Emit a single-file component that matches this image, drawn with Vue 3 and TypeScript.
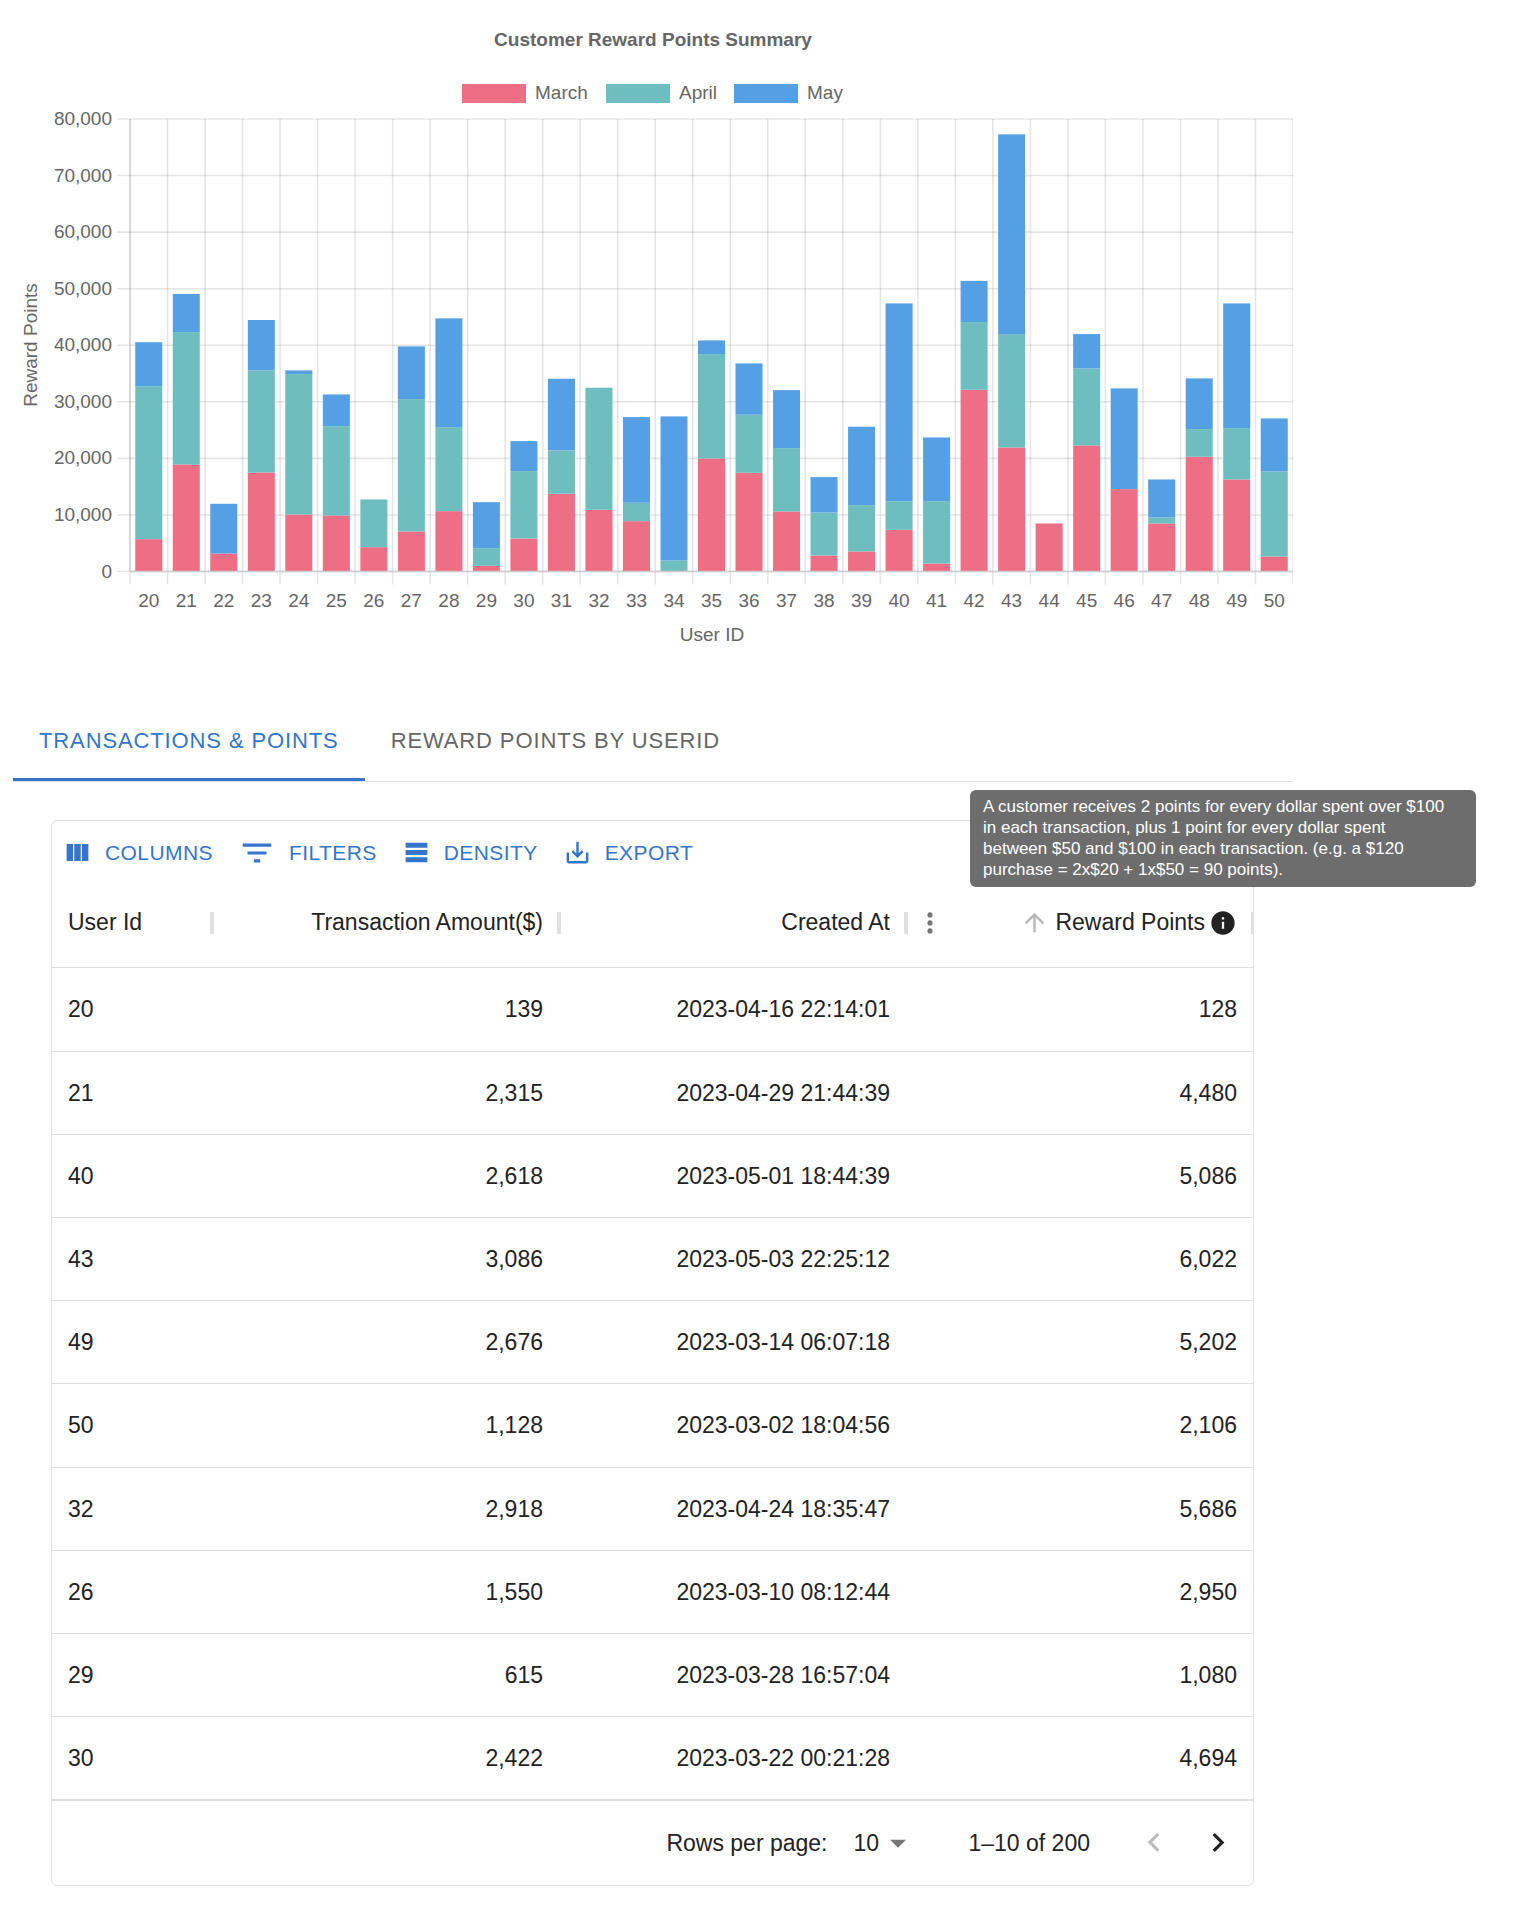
<script setup lang="ts">
import { computed, ref } from 'vue'

interface Transaction {
  userId: number
  amount: number
  createdAt: string
  points: number
}

const months = [
  { name: 'March', color: '#ee6e85', swatchX: 449, labelX: 522 },
  { name: 'April', color: '#6ebebf', swatchX: 593, labelX: 666 },
  { name: 'May', color: '#55a0e5', swatchX: 721, labelX: 794 },
]

// Running totals per user: [March, March + April, March + April + May]
const totals: Record<number, number[]> = {
  20: [5720, 32780, 40540],
  21: [18930, 42330, 49080],
  22: [3180, 3180, 11970],
  23: [17510, 35550, 44460],
  24: [10080, 34900, 35550],
  25: [9900, 25700, 31300],
  26: [4300, 12740, 12740],
  27: [7080, 30480, 39800],
  28: [10670, 25530, 44750],
  29: [1000, 4130, 12260],
  30: [5840, 17750, 23050],
  31: [13740, 21400, 34080],
  32: [10910, 32490, 32490],
  33: [8900, 12150, 27300],
  34: [0, 1950, 27420],
  35: [19990, 38440, 40860],
  36: [17450, 27710, 36790],
  37: [10610, 21820, 32070],
  38: [2830, 10440, 16690],
  39: [3540, 11730, 25590],
  40: [7370, 12440, 47400],
  41: [1415, 12440, 23700],
  42: [32130, 44100, 51380],
  43: [21930, 41980, 77280],
  44: [8490, 8490, 8490],
  45: [22290, 35910, 41980],
  46: [14560, 14560, 32370],
  47: [8490, 9550, 16270],
  48: [20280, 25180, 34140],
  49: [16270, 25350, 47400],
  50: [2650, 17690, 27060],
}

const plot = { left: 117, right: 1280, top: 106, bottom: 558.5, max: 80000 }
const users = Object.keys(totals).map(Number)
const step = (plot.right - plot.left) / users.length
const barWidth = step * 0.72

const yOf = (v: number) => plot.bottom - (v / plot.max) * (plot.bottom - plot.top)

const ticks = Array.from({ length: 9 }, (_, i) => ({
  y: yOf(i * 10000),
  label: (i * 10000).toLocaleString('en-US'),
}))
const columnLines = Array.from({ length: users.length + 1 }, (_, i) => plot.left + i * step)

const bars = computed(() =>
  users.map((id, i) => {
    const center = plot.left + (i + 0.5) * step
    const segments = totals[id]
      .map((total, m) => {
        const base = m === 0 ? 0 : totals[id][m - 1]
        return { y: yOf(total), height: yOf(base) - yOf(total), color: months[m].color }
      })
      .filter((s) => s.height > 0)
    return { id, center, x: center - barWidth / 2, segments }
  }),
)

const rows: Transaction[] = [
  { userId: 20, amount: 139, createdAt: '2023-04-16 22:14:01', points: 128 },
  { userId: 21, amount: 2315, createdAt: '2023-04-29 21:44:39', points: 4480 },
  { userId: 40, amount: 2618, createdAt: '2023-05-01 18:44:39', points: 5086 },
  { userId: 43, amount: 3086, createdAt: '2023-05-03 22:25:12', points: 6022 },
  { userId: 49, amount: 2676, createdAt: '2023-03-14 06:07:18', points: 5202 },
  { userId: 50, amount: 1128, createdAt: '2023-03-02 18:04:56', points: 2106 },
  { userId: 32, amount: 2918, createdAt: '2023-04-24 18:35:47', points: 5686 },
  { userId: 26, amount: 1550, createdAt: '2023-03-10 08:12:44', points: 2950 },
  { userId: 29, amount: 615, createdAt: '2023-03-28 16:57:04', points: 1080 },
  { userId: 30, amount: 2422, createdAt: '2023-03-22 00:21:28', points: 4694 },
]

const tools = [
  {
    label: 'Columns',
    path: 'M14.67 5v14H9.33V5h5.34zm1 14H21V5h-5.33v14zm-7.34 0V5H3v14h5.33z',
    large: false,
  },
  { label: 'Filters', path: 'M10 18h4v-2h-4v2zM3 6v2h18V6H3zm3 7h12v-2H6v2z', large: true },
  { label: 'Density', path: 'M21 8H3V4h18v4zm0 2H3v4h18v-4zm0 6H3v4h18v-4z', large: false },
  {
    label: 'Export',
    path: 'M19 12v7H5v-7H3v7c0 1.1.9 2 2 2h14c1.1 0 2-.9 2-2v-7h-2zm-6 .67l2.59-2.58L17 11.5l-5 5-5-5 1.41-1.41L11 12.67V3h2v9.67z',
    large: false,
  },
]

const tabs = ['Transactions & Points', 'Reward Points By UserId']
const activeTab = ref(0)
const pageSize = ref(10)
</script>

<template>
  <main class="page">
    <svg class="chart" viewBox="0 0 1280 640" role="img" aria-label="Customer Reward Points Summary">
      <text class="title" x="640" y="33" text-anchor="middle">Customer Reward Points Summary</text>
      <g v-for="m in months" :key="m.name">
        <rect :x="m.swatchX" y="71" width="64" height="19" :fill="m.color" />
        <text :x="m.labelX" y="86">{{ m.name }}</text>
      </g>

      <g class="grid-lines">
        <line v-for="t in ticks" :key="t.label" :x1="plot.left - 13" :x2="plot.right" :y1="t.y" :y2="t.y" />
        <line v-for="x in columnLines" :key="x" :x1="x" :x2="x" :y1="plot.top" :y2="plot.bottom + 13" />
        <line :x1="plot.left" :x2="plot.left" :y1="plot.top" :y2="plot.bottom" />
      </g>

      <g v-for="b in bars" :key="b.id">
        <rect
          v-for="s in b.segments"
          :key="s.color"
          :x="b.x"
          :y="s.y"
          :width="barWidth"
          :height="s.height"
          :fill="s.color"
        />
        <text :x="b.center" y="594" text-anchor="middle">{{ b.id }}</text>
      </g>
      <line class="axis" :x1="plot.left" :x2="plot.right" :y1="plot.bottom" :y2="plot.bottom" />

      <text v-for="t in ticks" :key="t.label" x="99" :y="t.y + 6" text-anchor="end">{{ t.label }}</text>
      <text x="699" y="628" text-anchor="middle">User ID</text>
      <text x="24" y="332" text-anchor="middle" transform="rotate(-90 24 332)">Reward Points</text>
    </svg>

    <div class="tabs" role="tablist">
      <button
        v-for="(tab, i) in tabs"
        :key="tab"
        type="button"
        role="tab"
        class="tab"
        :class="{ active: activeTab === i }"
        :aria-selected="activeTab === i"
        @click="activeTab = i"
      >
        {{ tab }}
      </button>
    </div>

    <section class="panel" role="tabpanel">
      <div class="data-grid">
        <div class="toolbar">
          <button v-for="tool in tools" :key="tool.label" type="button" class="tool">
            <svg :class="tool.large ? 'icon-lg' : 'icon-sm'" viewBox="0 0 24 24" aria-hidden="true">
              <path :d="tool.path" />
            </svg>
            {{ tool.label }}
          </button>
        </div>

        <table>
          <thead>
            <tr>
              <th class="col-id" scope="col">User Id<span class="separator"></span></th>
              <th scope="col">Transaction Amount($)<span class="separator"></span></th>
              <th scope="col">Created At<span class="separator"></span></th>
              <th scope="col">
                <div class="head">
                  <button type="button" class="menu" aria-label="Column menu">
                    <svg viewBox="0 0 24 24" aria-hidden="true">
                      <path
                        d="M12 8c1.1 0 2-.9 2-2s-.9-2-2-2-2 .9-2 2 .9 2 2 2zm0 2c-1.1 0-2 .9-2 2s.9 2 2 2 2-.9 2-2-.9-2-2-2zm0 6c-1.1 0-2 .9-2 2s.9 2 2 2 2-.9 2-2-.9-2-2-2z"
                      />
                    </svg>
                  </button>
                  <button type="button" class="sort" aria-label="Sort">
                    <svg class="icon-sm" viewBox="0 0 24 24" aria-hidden="true">
                      <path d="M4 12l1.41 1.41L11 7.83V20h2V7.83l5.58 5.59L20 12l-8-8-8 8z" />
                    </svg>
                  </button>
                  <span>Reward Points</span>
                  <span class="info">
                    <svg viewBox="0 0 24 24" aria-hidden="true">
                      <path
                        d="M12 2C6.48 2 2 6.48 2 12s4.48 10 10 10 10-4.48 10-10S17.52 2 12 2zm1 15h-2v-6h2v6zm0-8h-2V7h2v2z"
                      />
                    </svg>
                    <span class="tooltip" role="tooltip">
                      A customer receives 2 points for every dollar spent over $100 in each transaction, plus 1 point
                      for every dollar spent between $50 and $100 in each transaction. (e.g. a $120 purchase = 2x$20 +
                      1x$50 = 90 points).
                    </span>
                  </span>
                </div>
                <span class="separator last"></span>
              </th>
            </tr>
          </thead>
          <tbody>
            <tr v-for="r in rows" :key="r.userId">
              <td class="col-id">{{ r.userId }}</td>
              <td>{{ r.amount.toLocaleString('en-US') }}</td>
              <td>{{ r.createdAt }}</td>
              <td>{{ r.points.toLocaleString('en-US') }}</td>
            </tr>
          </tbody>
        </table>

        <footer class="footer">
          <label for="page-size">Rows per page:</label>
          <div class="select">
            <select id="page-size" v-model="pageSize">
              <option :value="10">10</option>
              <option :value="25">25</option>
              <option :value="50">50</option>
            </select>
            <svg viewBox="0 0 24 24" aria-hidden="true"><path d="M7 10l5 5 5-5z" /></svg>
          </div>
          <span>1–10 of 200</span>
          <div class="pager">
            <button type="button" aria-label="Previous page" disabled>
              <svg viewBox="0 0 24 24" aria-hidden="true">
                <path d="M15.41 16.09l-4.58-4.59 4.58-4.59L14 5.5l-6 6 6 6z" />
              </svg>
            </button>
            <button type="button" aria-label="Next page">
              <svg viewBox="0 0 24 24" aria-hidden="true">
                <path d="M8.59 16.34l4.58-4.59-4.58-4.59L10 5.75l6 6-6 6z" />
              </svg>
            </button>
          </div>
        </footer>
      </div>
    </section>
  </main>
</template>

<style>
body {
  background: #fff;
}
</style>

<style scoped>
.page {
  box-sizing: border-box;
  max-width: 1306px;
  padding: 13px;
  color: #222;
  font-family: 'Liberation Sans', Arial, sans-serif;
  font-size: 23px;
}

button,
select {
  margin: 0;
  padding: 0;
  border: 0;
  background: none;
  color: inherit;
  font: inherit;
  cursor: pointer;
}

svg {
  display: block;
  flex-shrink: 0;
  fill: currentColor;
}

.chart {
  width: 100%;
  height: auto;
}

.chart text {
  fill: #666;
  font-size: 19px;
}

.chart .title {
  font-weight: 700;
}

.grid-lines line {
  stroke: rgba(0, 0, 0, 0.1);
  stroke-width: 1.6;
}

.axis {
  stroke: #ccc;
  stroke-width: 1.6;
}

.tabs {
  display: flex;
  margin-top: 51px;
  border-bottom: 1px solid #e0e0e0;
}

.tab {
  height: 77px;
  padding: 0 26px;
  border-bottom: 3px solid transparent;
  color: #666;
  font-size: 22px;
  letter-spacing: 0.04em;
  text-transform: uppercase;
}

.tab.active {
  border-bottom-color: #3575cd;
  color: #3575cd;
}

.panel {
  padding: 38px 39px 0 38px;
}

.data-grid {
  border: 1px solid #e0e0e0;
  border-radius: 6px;
}

.toolbar {
  display: flex;
  gap: 12px;
  padding: 6px 6px 0;
}

.tool {
  display: flex;
  align-items: center;
  gap: 13px;
  height: 51px;
  padding: 0 8px 0 5px;
  color: #3575cd;
  font-size: 21px;
  letter-spacing: 0.02em;
  text-transform: uppercase;
}

.icon-sm {
  width: 29px;
  height: 29px;
}

.icon-lg {
  width: 38px;
  height: 38px;
}

table {
  width: 100%;
  border-spacing: 0;
  table-layout: fixed;
}

th,
td {
  box-sizing: border-box;
  padding: 0 16px;
  border-bottom: 1px solid #e0e0e0;
  text-align: right;
  white-space: nowrap;
}

th {
  position: relative;
  height: 90px;
  font-weight: 400;
}

td {
  height: 83px;
}

tbody tr:nth-child(5n + 1) td {
  height: 84px;
}

.col-id {
  width: 160px;
  text-align: left;
}

.separator {
  position: absolute;
  top: 34px;
  right: -2px;
  width: 4px;
  height: 22px;
  background: #e0e0e0;
}

.separator.last {
  right: 0;
  width: 2px;
}

.head {
  display: flex;
  align-items: center;
}

.menu {
  margin-left: -8px;
  margin-right: auto;
  color: #757575;
}

.menu svg {
  width: 32px;
  height: 32px;
}

.sort {
  margin-right: 6px;
  color: #b8b8b8;
}

.info {
  position: relative;
  margin-left: 4px;
}

.info > svg {
  width: 28px;
  height: 28px;
}

.tooltip {
  position: absolute;
  z-index: 1;
  bottom: 50px;
  left: 50%;
  box-sizing: border-box;
  width: 506px;
  padding: 6px 28px 7px 13px;
  border-radius: 6px;
  background: rgba(97, 97, 97, 0.92);
  color: #fff;
  font-size: 17px;
  line-height: 21px;
  text-align: left;
  white-space: normal;
  transform: translateX(-50%);
}

.footer {
  display: flex;
  align-items: center;
  justify-content: flex-end;
  height: 84px;
  padding-right: 3px;
  border-top: 1px solid #e0e0e0;
}

.select {
  position: relative;
  margin: 0 51px 0 13px;
}

.select select {
  padding: 0 38px 0 13px;
  appearance: none;
}

.select svg {
  position: absolute;
  top: 50%;
  right: 0;
  width: 38px;
  height: 38px;
  color: #757575;
  pointer-events: none;
  transform: translateY(-50%);
}

.pager {
  display: flex;
  margin-left: 32px;
}

.pager button {
  padding: 13px;
}

.pager button:disabled {
  color: #bdbdbd;
}

.pager svg {
  width: 38px;
  height: 38px;
}
</style>
